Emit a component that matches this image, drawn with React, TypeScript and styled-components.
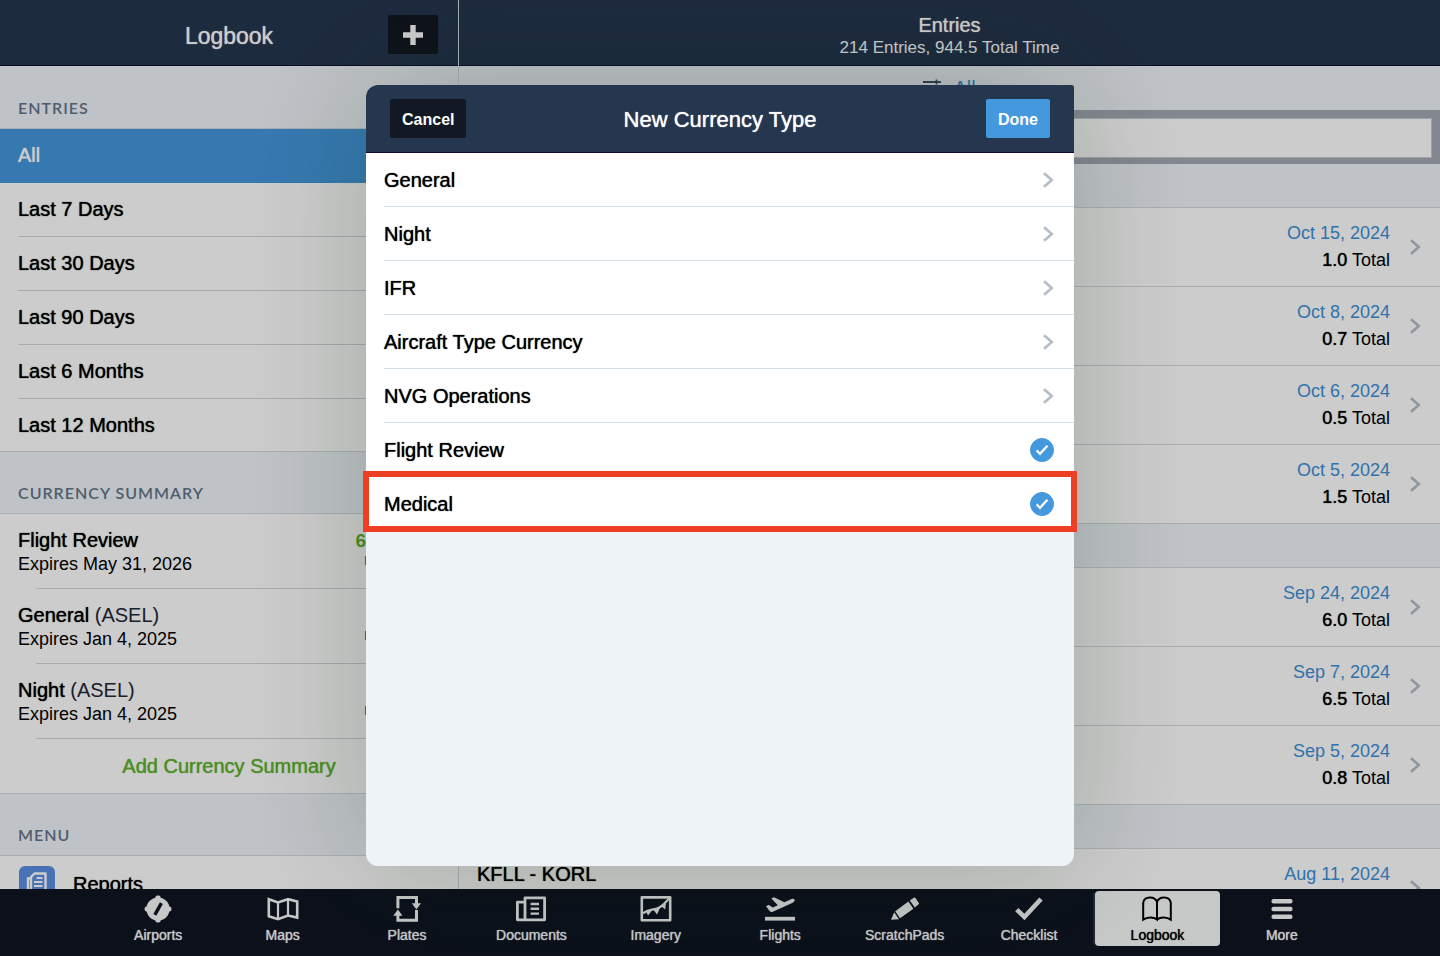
import React from "react";
import styled, { createGlobalStyle, css } from "styled-components";

const color = {
  navy: "#25364f",
  navyEdge: "#0b1230",
  ink: "#000",
  blue: "#4498dd",
  link: "#3c8fd6",
  green: "#5fb22f",
  panel: "#eff3f8",
  line: "#d3dae1",
  rule: "#cfd6dc",
  chevron: "#b3bcc7",
  heading: "#62758a",
  tabBar: "#0e1522",
  mark: "#ee3f24",
};

const GlobalStyle = createGlobalStyle`
  *, *::before, *::after { box-sizing: border-box; }
  body {
    margin: 0;
    background: ${color.tabBar};
    color: ${color.ink};
    font-family: "Helvetica Neue", "Liberation Sans", Arial, sans-serif;
    font-size: 20px;
  }
  button, input { font: inherit; color: inherit; }
  button { margin: 0; border: 0; background: none; cursor: pointer; }
  h1, h2, h3, p, ul { margin: 0; padding: 0; font-weight: 400; }
  ul { list-style: none; }
  svg { display: block; flex: none; }
`;

const medium = css`
  text-shadow: 0 0 1px currentColor;
`;

const Page = styled.div`
  display: flex;
  flex-direction: column;
  height: 100vh;
`;

const Columns = styled.div`
  display: flex;
  flex: 1;
  min-height: 0;
  background: #fff;
`;

const Sidebar = styled.aside`
  flex: 0 0 459px;
  overflow: hidden;
  border-right: 1px solid ${color.line};
`;

const Main = styled.main`
  flex: 1;
  min-width: 0;
  overflow: hidden;
`;

const TopBar = styled.header`
  position: relative;
  display: flex;
  flex-direction: column;
  align-items: center;
  justify-content: center;
  height: 66px;
  padding-top: 7px;
  background: ${color.navy};
  border-bottom: 1px solid ${color.navyEdge};
  color: #fff;
`;

const SidebarTitle = styled.h1`
  ${medium}
  font-size: 23px;
  line-height: 28px;
`;

const MainTitle = styled.h1`
  ${medium}
  font-size: 20px;
  line-height: 22px;
`;

const Subtitle = styled.p`
  font-size: 17px;
  line-height: 23px;
`;

const AddButton = styled.button`
  position: absolute;
  right: 20px;
  top: 15px;
  display: grid;
  place-items: center;
  width: 50px;
  height: 39px;
  padding: 0;
  border-radius: 2px;
  background: #111820;
`;

const SectionHead = styled.h2<{ $short?: boolean }>`
  display: flex;
  align-items: flex-end;
  height: ${(p) => (p.$short ? 44 : 63)}px;
  padding: 0 18px 10px;
  background: ${color.panel};
  border-bottom: 1px solid ${color.line};
  color: ${color.heading};
  font-family: Lato, "Open Sans", sans-serif;
  font-size: 16px;
  font-weight: 600;
  line-height: 20px;
  letter-spacing: 1px;
`;

const NavItem = styled.button<{ $selected?: boolean }>`
  ${medium}
  display: block;
  width: 100%;
  height: 54px;
  padding: 0 0 0 18px;
  text-align: left;
  background: ${(p) => (p.$selected ? color.blue : "#fff")};
  color: ${(p) => (p.$selected ? "#fff" : color.ink)};
`;

const NavLabel = styled.span<{ $plain?: boolean }>`
  display: block;
  line-height: 53px;
  border-bottom: 1px solid ${(p) => (p.$plain ? "transparent" : color.rule)};
`;

const NavList = styled.ul`
  margin-bottom: -2px;
`;

const SummaryHead = styled(SectionHead)`
  position: relative;
  border-top: 1px solid ${color.line};
`;

const Currency = styled.li`
  height: 75px;
  padding-left: 18px;
`;

const CurrencyBody = styled.div`
  display: flex;
  justify-content: space-between;
  height: 74px;
  padding: 14px 19px 0 0;
`;

const CurrencyRule = styled.div`
  height: 1px;
  margin-left: 18px;
  background: ${color.rule};
`;

const CurrencyName = styled.h3`
  ${medium}
  font-size: 20px;
  line-height: 25px;
`;

const Rating = styled.span`
  color: #1d2838;
  text-shadow: none;
`;

const CurrencyNote = styled.p`
  font-size: 18px;
  line-height: 22px;
`;

const CurrencySide = styled.div`
  display: flex;
  flex-direction: column;
  justify-content: flex-end;
  align-items: flex-end;
  height: 39px;
`;

const CurrencyValue = styled.strong`
  color: ${color.green};
  font-size: 19px;
  line-height: 25px;
`;

const CurrencyUnit = styled.span`
  font-size: 17px;
  line-height: 14px;
`;

const AddCurrency = styled.button`
  display: block;
  width: 100%;
  height: 54px;
  padding: 0;
  color: ${color.green};
  ${medium}
`;

const MenuItem = styled.button`
  ${medium}
  display: flex;
  align-items: center;
  gap: 18px;
  width: 100%;
  height: 56px;
  padding: 0 19px;
`;

const FilterBar = styled.div`
  display: flex;
  justify-content: center;
  height: 44px;
  background: ${color.panel};
`;

const FilterButton = styled.button`
  display: flex;
  align-items: center;
  gap: 12px;
  padding: 0;
  color: ${color.link};
`;

const SearchBar = styled.div`
  height: 54px;
  padding: 8px 8px 6px;
  background: #a4a9b4;
`;

const SearchInput = styled.input`
  display: block;
  width: 100%;
  height: 40px;
  padding: 0 12px;
  border: 1px solid #c6cad2;
  background: #fff;
`;

const EntryRow = styled.li`
  display: flex;
  justify-content: space-between;
  height: 79px;
  padding: 12px 19px 0 18px;
  border-bottom: 1px solid ${color.line};
`;

const EntryRoute = styled.h3`
  ${medium}
  font-size: 20px;
  line-height: 26px;
`;

const EntrySide = styled.div`
  display: flex;
  gap: 19px;
  margin-left: auto;
  font-size: 18px;
  line-height: 27px;
  text-align: right;
`;

const EntryDate = styled.p`
  color: ${color.link};
`;

const EntryTime = styled.span`
  ${medium}
`;

const EntryArrow = styled.span`
  padding-top: 19px;
`;

const TabBar = styled.nav`
  display: flex;
  height: 67px;
  padding: 2px 96px 0;
  background: ${color.tabBar};
`;

const Tab = styled.button<{ $active?: boolean }>`
  ${medium}
  display: flex;
  flex: 1 1 0;
  min-width: 0;
  flex-direction: column;
  align-items: center;
  height: 55px;
  padding: 4px 0 0;
  border-radius: 4px;
  color: #f8fafa;
  font-size: 14px;
  line-height: 16px;

  ${(p) =>
    p.$active &&
    css`
      margin-left: 4px;
      background: #f9fbfb;
      color: #000;
      box-shadow: -3px 0 0 -1px #2a323c;
    `}
`;

const TabIcon = styled.span`
  display: grid;
  place-items: center;
  height: 28px;
  margin-bottom: 4px;
`;

const Backdrop = styled.div`
  position: fixed;
  inset: 0;
  display: flex;
  justify-content: center;
  padding: 85px 16px 90px;
  background: rgba(0, 0, 0, 0.2);
`;

const Dialog = styled.section`
  display: flex;
  flex-direction: column;
  width: 708px;
  max-width: 100%;
  border-radius: 12px 2px 12px 12px;
  background: #eef3f7;
  box-shadow: 0 0 130px rgba(10, 35, 0, 0.22);
`;

const DialogHeader = styled.header`
  display: flex;
  align-items: center;
  justify-content: space-between;
  height: 68px;
  padding: 0 24px;
  border-radius: 12px 2px 0 0;
  border-bottom: 1px solid #0b0a45;
  background: ${color.navy};
  color: #fff;
`;

const DialogSide = styled.div<{ $end?: boolean }>`
  display: flex;
  flex: 1;
  justify-content: ${(p) => (p.$end ? "flex-end" : "flex-start")};
`;

const DialogTitle = styled.h2`
  ${medium}
  padding-top: 3px;
  font-size: 22px;
  line-height: 28px;
`;

const DialogButton = styled.button<{ $primary?: boolean }>`
  height: 39px;
  padding: 2px 12px 0;
  border-radius: 2px;
  background: ${(p) => (p.$primary ? color.blue : "#121924")};
  font-size: 16px;
  font-weight: 700;
`;

const TypeList = styled.ul`
  background: #fff;
`;

const TypeItem = styled.li`
  position: relative;
  padding-left: 18px;
`;

const typeRow = css`
  ${medium}
  display: flex;
  align-items: center;
  justify-content: space-between;
  width: 100%;
  height: 54px;
  padding: 1px 20px 0 0;
  border-bottom: 1px solid #d5e0e8;
  text-align: left;
  cursor: pointer;

  li:last-child > & { border-color: transparent; }
`;

const TypeButton = styled.button`
  ${typeRow}
`;

const TypeLabel = styled.label`
  ${typeRow}
`;

const CheckBox = styled.span`
  display: grid;
  place-items: center;

  > * { grid-area: 1 / 1; }
  > svg { pointer-events: none; }
`;

const CheckInput = styled.input`
  width: 24px;
  height: 24px;
  margin: 0;
  appearance: none;
  border-radius: 50%;
  border: 1px solid ${color.blue};
  background: #fff;

  &:checked { background: ${color.blue}; }
`;

const Highlight = styled.span`
  position: absolute;
  inset: -6px -3px -1px;
  border: 6px solid ${color.mark};
  pointer-events: none;
`;

const Chevron = () => (
  <svg width="12" height="16" viewBox="0 0 12 16" fill="none" stroke={color.chevron} strokeWidth="2.6">
    <path d="M2 1.2 9.8 8 2 14.8" />
  </svg>
);

const AirportsIcon = () => (
  <svg width="28" height="28" viewBox="0 0 28 28" fill="currentColor">
    <circle cx="14" cy="14" r="11.6" />
    <rect x="11.4" y="0.6" width="5.2" height="26.8" rx="2" />
    <rect x="0.6" y="11.4" width="26.8" height="5.2" rx="2" />
    <path d="M17.4 8.2 10.8 19.8" stroke={color.tabBar} strokeWidth="3.4" />
  </svg>
);

const MapsIcon = () => (
  <svg width="32" height="24" viewBox="0 0 32 24" fill="none" stroke="currentColor" strokeWidth="2.6">
    <path d="M1.8 2.2 11 5.4 21 2.2 30.2 4.6V20.6L21 18.6 11 22.2 1.8 19.2Z" />
    <path d="M11 5.6V22M21 2.4v16.2" strokeWidth="2.2" />
  </svg>
);

const PlatesIcon = () => (
  <svg width="28" height="28" viewBox="0 0 28 28" fill="none" stroke="currentColor" strokeWidth="3">
    <path d="M4.900 13.200V2.600h18.600v7M23.500 15v10.200H4.900V19" />
    <path d="M18.800 8.200h9.200l-4.600 6.400ZM0.300 20.800h9.200L4.900 14.400Z" fill="currentColor" stroke="none" />
  </svg>
);

const DocumentsIcon = () => (
  <svg width="32" height="28" viewBox="0 0 32 28" fill="none" stroke="currentColor" strokeWidth="2.8" strokeLinejoin="round">
    <path d="M10 2.8h19.6v22H10Z" />
    <path d="M10 7.2H2.4v17.6H10" />
    <path d="M15.6 9h8.4M15.6 13.8h8.4M15.6 18.6h8.4" strokeWidth="2.4" />
  </svg>
);

const ImageryIcon = () => (
  <svg width="32" height="28" viewBox="0 0 32 28" fill="none" stroke="currentColor" strokeLinejoin="round">
    <path d="M1.8 2.4h28.4v22.8H1.8Z" strokeWidth="2.6" />
    <path d="M3 18.4C8 14 12 15.4 17 13.6S24 9 29 3.6" strokeWidth="2.2" />
    <path d="m6 16.6 2 3.8 4-5ZM13.8 15.2l3.2 4.4 3-6.6ZM21.6 11.6l3.6 2.8.8-6.6Z" fill="currentColor" stroke="none" />
  </svg>
);

const FlightsIcon = () => (
  <svg width="32" height="26" viewBox="0 0 32 26" fill="currentColor">
    <path d="M1 20.8h30v3.8H1z" />
    <path d="M2 10.2 4.8 9l4 2.4 5-2.2L7.4 2.4 10 1.2l10.4 5L26.4 3.4c2-.9 3.8-.6 4.2.4.5 1-.6 2.2-2.4 3.1L8.8 15.8C7.4 16.4 6.4 16 5.6 15Z" />
  </svg>
);

const ScratchPadsIcon = () => (
  <svg width="28" height="24" viewBox="0 0 28 24" fill="currentColor">
    <path d="M3.2 15.2 0 22.8l8-.6ZM4.2 14.2 17.4 4.6l5 7.2L9 21.2ZM18.8 3.6 22.8.8C23.6.3 24 .4 24.500 1l3.300 4.900c.4.7.3 1.100-.4 1.600l-3.600 2.900Z" />
  </svg>
);

const ChecklistIcon = () => (
  <svg width="28" height="24" viewBox="0 0 28 24" fill="none" stroke="currentColor" strokeWidth="4.6">
    <path d="M1.8 12.6 9.4 20 26 2" />
  </svg>
);

const LogbookIcon = () => (
  <svg width="30" height="26" viewBox="0 0 30 26" fill="none" stroke="currentColor" strokeWidth="2">
    <path d="M15 23.4V6.2C14 2.6 11.2 1.4 8 1.4S1.8 3 1.2 6.6v17C5 20.8 11.6 20.6 15 23.4Z" />
    <path d="M15 6.2c1-3.6 3.8-4.8 7-4.8s6.2 1.6 6.8 5.2v17c-3.8-2.8-10.4-3-13.8-.2" />
  </svg>
);

const MoreIcon = () => (
  <svg width="22" height="22" viewBox="0 0 22 22" fill="currentColor">
    <rect x="0.5" y="1" width="21" height="4.4" rx="2" />
    <rect x="0.5" y="8.8" width="21" height="4.4" rx="2" />
    <rect x="0.5" y="16.6" width="21" height="4.4" rx="2" />
  </svg>
);

const PlusIcon = () => (
  <svg width="20" height="20" viewBox="0 0 20 20" stroke="#fff" strokeWidth="5.4">
    <path d="M10 0v20M0 10h20" />
  </svg>
);

const SlidersIcon = () => (
  <svg width="18" height="18" viewBox="0 0 18 18" stroke="#3c5262" strokeWidth="1.8">
    <path d="M0 3h18M0 9h18M0 15h18M13.5 0.500v5M5 6.500v5M11 12.500v5" />
  </svg>
);

const ReportsIcon = () => (
  <svg width="36" height="36" viewBox="0 0 36 36" fill="none">
    <rect width="36" height="36" rx="6" fill="#5b8fe0" />
    <path d="M15.500 7.500h11V28H12V11Z" stroke="#fff" strokeWidth="2.4" strokeLinejoin="round" />
    <path d="M11 12.500H9v18H24" stroke="#fff" strokeWidth="2.4" />
    <path d="M17.500 12h6M15 16h8.500M15 20h8.500M15 24h8.500" stroke="#fff" strokeWidth="2" />
  </svg>
);

const TickIcon = () => (
  <svg width="14" height="12" viewBox="0 0 14 12" fill="none" stroke="#fff" strokeWidth="2.2">
    <path d="M1.6 6.4 5 9.8 12.4 1.8" />
  </svg>
);

const periods = ["All", "Last 7 Days", "Last 30 Days", "Last 90 Days", "Last 6 Months", "Last 12 Months"];

const currencies = [
  { name: "Flight Review", note: "Expires May 31, 2026", value: "6 Months" },
  { name: "General", rating: "(ASEL)", note: "Expires Jan 4, 2025" },
  { name: "Night", rating: "(ASEL)", note: "Expires Jan 4, 2025" },
];

type Entry = { date: string; time?: string; route?: string };

const months: Entry[][] = [
  [
    { date: "Oct 15, 2024", time: "1.0" },
    { date: "Oct 8, 2024", time: "0.7" },
    { date: "Oct 6, 2024", time: "0.5" },
    { date: "Oct 5, 2024", time: "1.5" },
  ],
  [
    { date: "Sep 24, 2024", time: "6.0" },
    { date: "Sep 7, 2024", time: "6.5" },
    { date: "Sep 5, 2024", time: "0.8" },
  ],
  [{ date: "Aug 11, 2024", route: "KFLL - KORL" }],
];

const tabs = [
  { label: "Airports", Icon: AirportsIcon },
  { label: "Maps", Icon: MapsIcon },
  { label: "Plates", Icon: PlatesIcon },
  { label: "Documents", Icon: DocumentsIcon },
  { label: "Imagery", Icon: ImageryIcon },
  { label: "Flights", Icon: FlightsIcon },
  { label: "ScratchPads", Icon: ScratchPadsIcon },
  { label: "Checklist", Icon: ChecklistIcon },
  { label: "Logbook", Icon: LogbookIcon },
  { label: "More", Icon: MoreIcon },
];

const groups = ["General", "Night", "IFR", "Aircraft Type Currency", "NVG Operations"];
const singles = ["Flight Review", "Medical"];

export default function App() {
  return (
    <Page>
      <GlobalStyle />
      <Columns>
        <Sidebar>
          <TopBar>
            <SidebarTitle>Logbook</SidebarTitle>
            <AddButton aria-label="Add">
              <PlusIcon />
            </AddButton>
          </TopBar>
          <SectionHead>ENTRIES</SectionHead>
          <NavList>
            {periods.map((label, i) => (
              <li key={label}>
                <NavItem $selected={i === 0}>
                  <NavLabel $plain={i === 0 || i === periods.length - 1}>{label}</NavLabel>
                </NavItem>
              </li>
            ))}
          </NavList>
          <SummaryHead>CURRENCY SUMMARY</SummaryHead>
          <ul>
            {currencies.map((c) => (
              <Currency key={c.name}>
                <CurrencyBody>
                  <div>
                    <CurrencyName>
                      {c.name} {c.rating && <Rating>{c.rating}</Rating>}
                    </CurrencyName>
                    <CurrencyNote>{c.note}</CurrencyNote>
                  </div>
                  <CurrencySide>
                    {c.value && <CurrencyValue>{c.value}</CurrencyValue>}
                    <CurrencyUnit>remaining</CurrencyUnit>
                  </CurrencySide>
                </CurrencyBody>
                <CurrencyRule />
              </Currency>
            ))}
          </ul>
          <AddCurrency>Add Currency Summary</AddCurrency>
          <SummaryHead>MENU</SummaryHead>
          <MenuItem>
            <ReportsIcon />
            Reports
          </MenuItem>
        </Sidebar>
        <Main>
          <TopBar>
            <MainTitle>Entries</MainTitle>
            <Subtitle>214 Entries, 944.5 Total Time</Subtitle>
          </TopBar>
          <FilterBar>
            <FilterButton>
              <SlidersIcon />
              All
            </FilterButton>
          </FilterBar>
          <SearchBar>
            <SearchInput type="search" aria-label="Search entries" />
          </SearchBar>
          {months.map((entries, i) => (
            <section key={i}>
              <SectionHead as="div" $short />
              <ul>
                {entries.map((e) => (
                  <EntryRow key={e.date}>
                    {e.route && <EntryRoute>{e.route}</EntryRoute>}
                    <EntrySide>
                      <div>
                        <EntryDate>{e.date}</EntryDate>
                        {e.time && (
                          <p>
                            <EntryTime>{e.time}</EntryTime> Total
                          </p>
                        )}
                      </div>
                      <EntryArrow>
                        <Chevron />
                      </EntryArrow>
                    </EntrySide>
                  </EntryRow>
                ))}
              </ul>
            </section>
          ))}
        </Main>
      </Columns>
      <TabBar>
        {tabs.map(({ label, Icon }) => (
          <Tab key={label} $active={label === "Logbook"}>
            <TabIcon>
              <Icon />
            </TabIcon>
            {label}
          </Tab>
        ))}
      </TabBar>
      <Backdrop>
        <Dialog role="dialog" aria-modal="true" aria-labelledby="dialog-title">
          <DialogHeader>
            <DialogSide>
              <DialogButton>Cancel</DialogButton>
            </DialogSide>
            <DialogTitle id="dialog-title">New Currency Type</DialogTitle>
            <DialogSide $end>
              <DialogButton $primary>Done</DialogButton>
            </DialogSide>
          </DialogHeader>
          <TypeList>
            {groups.map((name) => (
              <TypeItem key={name}>
                <TypeButton>
                  {name}
                  <Chevron />
                </TypeButton>
              </TypeItem>
            ))}
            {singles.map((name) => (
              <TypeItem key={name}>
                <TypeLabel>
                  {name}
                  <CheckBox>
                    <CheckInput type="checkbox" defaultChecked />
                    <TickIcon />
                  </CheckBox>
                </TypeLabel>
                {name === "Medical" && <Highlight />}
              </TypeItem>
            ))}
          </TypeList>
        </Dialog>
      </Backdrop>
    </Page>
  );
}
